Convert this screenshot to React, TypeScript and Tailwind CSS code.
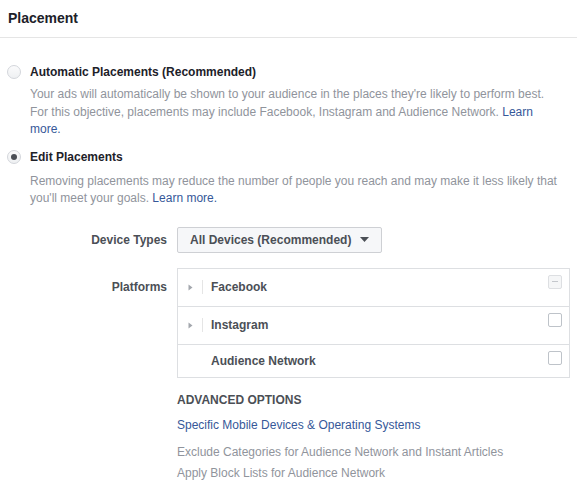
import React from 'react';

const Radio = ({ checked }: { checked?: boolean }) => (
  <span className="flex h-[14px] w-[14px] shrink-0 items-center justify-center rounded-full border border-[#d3d6db] bg-gradient-to-b from-[#fbfbfc] to-[#eef0f2]">
    {checked && <span className="h-[6px] w-[6px] rounded-full bg-[#4b4f56]" />}
  </span>
);

const Caret = () => (
  <svg width="5" height="7" viewBox="0 0 5 7" className="shrink-0">
    <path d="M0.5 0.5 L4.5 3.5 L0.5 6.5 Z" fill="#a3a7ad" />
  </svg>
);

interface PlatformRow {
  name: string;
  expandable: boolean;
  state: 'partial' | 'off';
  h: string;
}

const PLATFORMS: PlatformRow[] = [
  { name: 'Facebook', expandable: true, state: 'partial', h: 'h-[37px]' },
  { name: 'Instagram', expandable: true, state: 'off', h: 'h-[38px]' },
  { name: 'Audience Network', expandable: false, state: 'off', h: 'h-[33px]' },
];

export default function App() {
  return (
    <div className="min-h-[490px] w-[577px] bg-white font-['Liberation_Sans',Arial,sans-serif] text-[12px] text-[#1d2129]">
      {/* Header */}
      <div className="flex h-[38px] items-center border-b border-[#e5e5e5] px-2 text-[14px] font-bold">
        Placement
      </div>

      {/* Automatic */}
      <div className="pl-[7px] pr-2 pt-[26px]">
        <label className="flex h-4 items-center gap-[9px]">
          <Radio />
          <span className="font-bold">Automatic Placements (Recommended)</span>
        </label>
        <p className="mt-[6px] w-[549px] pl-[23px] leading-[17.5px] text-[#90949c]">
          Your ads will automatically be shown to your audience in the places they're likely to perform best. For this
          objective, placements may include Facebook, Instagram and Audience Network.{' '}
          <a className="text-[#365899]">Learn more.</a>
        </p>

        {/* Edit */}
        <label className="mt-[10px] flex h-4 items-center gap-[9px]">
          <Radio checked />
          <span className="font-bold">Edit Placements</span>
        </label>
        <p className="mt-[8px] pl-[23px] pr-1 leading-[17px] text-[#90949c]">
          Removing placements may reduce the number of people you reach and may make it less likely that you'll meet
          your goals. <a className="text-[#365899]">Learn more.</a>
        </p>
      </div>

      {/* Form rows */}
      <div className="mt-[20px] grid grid-cols-[167px_393px] gap-x-[10px]">
        <div className="flex h-[26px] items-center justify-end font-bold text-[#4b4f56]">Device Types</div>
        <div>
          <button className="flex h-[26px] items-center gap-[9px] rounded-[2px] border border-[#ced0d4] bg-[#f6f7f9] pl-3 pr-3 font-bold text-[#4b4f56]">
            All Devices (Recommended)
            <svg width="9" height="5" viewBox="0 0 9 5">
              <path d="M0 0 H9 L4.5 5 Z" fill="#4b4f56" />
            </svg>
          </button>
        </div>

        <div className="mt-[15px] flex h-[38px] items-center justify-end font-bold text-[#4b4f56]">Platforms</div>
        <div className="mt-[15px] border border-[#dddfe2]">
          {PLATFORMS.map((p, i) => (
            <div
              key={p.name}
              className={`relative flex items-center ${p.h} ${i > 0 ? 'border-t border-[#dddfe2]' : ''}`}
            >
              <div className="flex w-[33px] items-center">
                {p.expandable && (
                  <>
                    <span className="ml-[10px] flex w-[14px]">
                      <Caret />
                    </span>
                    <span className="h-[14px] w-px bg-[#e5e5e5]" />
                  </>
                )}
              </div>
              <span className="font-bold text-[#4b4f56]">{p.name}</span>
              {p.state === 'partial' ? (
                <span className="absolute right-[7px] top-[6px] flex h-[14px] w-[14px] items-center justify-center rounded-[2px] border border-[#dddfe2] bg-[#f5f6f7]">
                  <span className="h-px w-[6px] bg-[#c4c7cc]" />
                </span>
              ) : (
                <span className="absolute right-[7px] top-[6px] h-[14px] w-[14px] rounded-[2px] border border-[#bec3c9] bg-white" />
              )}
            </div>
          ))}
        </div>

        <div />
        <div className="pt-[14px]">
          <div className="font-bold uppercase leading-4 text-[#4b4f56]">Advanced Options</div>
          <div className="mt-[9px] leading-4 text-[#365899]">Specific Mobile Devices &amp; Operating Systems</div>
          <div className="mt-[11px] leading-4 text-[#90949c]">Exclude Categories for Audience Network and Instant Articles</div>
          <div className="mt-[5px] leading-4 text-[#90949c]">Apply Block Lists for Audience Network</div>
        </div>
      </div>
    </div>
  );
}
